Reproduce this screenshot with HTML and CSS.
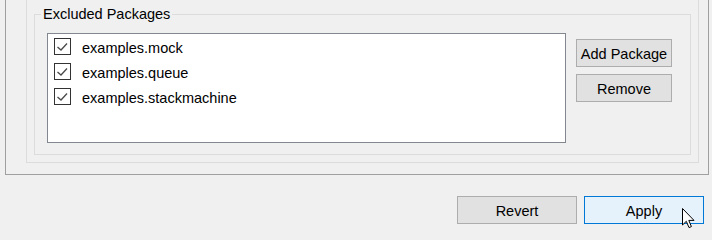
FILE: index.html
```html
<!DOCTYPE html>
<html>
<head>
<meta charset="utf-8">
<link rel="stylesheet" href="styles.css">
</head>
<body>
<div class="outer">
  <div class="middle">
    <div class="group">
      <div class="group-title">Excluded Packages</div>
      <div class="group-row">
        <div class="list">
          <div class="item"><span class="box"><svg width="15" height="15" viewBox="0 0 15 15"><polyline points="2.5,8 6,11 12,4.5" fill="none" stroke="#4a4a4a" stroke-width="1.3"/></svg></span><span class="label">examples.mock</span></div>
          <div class="item"><span class="box"><svg width="15" height="15" viewBox="0 0 15 15"><polyline points="2.5,8 6,11 12,4.5" fill="none" stroke="#4a4a4a" stroke-width="1.3"/></svg></span><span class="label">examples.queue</span></div>
          <div class="item"><span class="box"><svg width="15" height="15" viewBox="0 0 15 15"><polyline points="2.5,8 6,11 12,4.5" fill="none" stroke="#4a4a4a" stroke-width="1.3"/></svg></span><span class="label">examples.stackmachine</span></div>
        </div>
        <div class="side-buttons">
          <button class="btn side">Add Package</button>
          <button class="btn side">Remove</button>
        </div>
      </div>
    </div>
  </div>
</div>
<div class="footer">
  <button class="btn foot">Revert</button>
  <button class="btn foot primary">Apply
    <svg class="cursor" width="14" height="21" viewBox="0 0 14 21"><path d="M0.5,0.5 V17 L4.3,13.3 L7,19.6 L9.4,18.6 L6.8,12.4 H12 Z" fill="#fff" stroke="#000" stroke-width="1" stroke-linejoin="miter"/></svg>
  </button>
</div>
</body>
</html>
```
FILE: styles.css
```css
html, body {
  margin: 0;
  padding: 0;
  background: #f0f0f0;
}
body {
  width: 712px;
  height: 233px;
  overflow: hidden;
  font-family: "Liberation Sans", Arial, sans-serif;
  font-size: 14.5px;
  color: #000;
}
.outer {
  margin-left: 5px;
  width: 704px;
  box-sizing: border-box;
  border: 1px solid #a0a0a0;
  border-top: none;
  padding: 0 9px 11px 20px;
}
.middle {
  border: 1px solid #dcdcdc;
  border-top: none;
  padding: 14px 7px 7px 7px;
}
.group {
  border: 1px solid #dcdcdc;
  padding: 0 18px 11px 12px;
}
.group-title {
  width: max-content;
  margin: -9px 0 0 -6px;
  padding: 0 2px;
  background: #f0f0f0;
  line-height: 16px;
  height: 16px;
}
.group-row {
  display: flex;
  gap: 10px;
  margin-top: 11px;
}
.list {
  flex: 1;
  height: 110px;
  box-sizing: border-box;
  border: 1px solid #828790;
  background: #fff;
  padding: 4px 6px;
}
.item {
  display: flex;
  align-items: flex-start;
  height: 25px;
}
.box {
  width: 17px;
  height: 17px;
  box-sizing: border-box;
  border: 1px solid #333;
  background: #fff;
  display: flex;
  align-items: center;
  justify-content: center;
}
.box svg { display: block; }
.label {
  margin-left: 11px;
  line-height: 20px;
}
.side-buttons {
  display: flex;
  flex-direction: column;
  gap: 7px;
  padding-top: 6px;
}
.btn {
  font-family: "Liberation Sans", Arial, sans-serif;
  font-size: 14.5px;
  color: #000;
  background: #e1e1e1;
  border: 1px solid #adadad;
  box-sizing: border-box;
  padding: 2px 0 0 0;
  margin: 0;
  line-height: 16px;
  text-align: center;
}
.btn.side {
  width: 96px;
  height: 28px;
}
.footer {
  display: flex;
  justify-content: flex-end;
  gap: 7px;
  padding-right: 8px;
  margin-top: 21px;
}
.btn.foot {
  width: 120px;
  height: 28px;
}
.btn.primary {
  position: relative;
  background: #e5f1fb;
  border-color: #0078d7;
}
.cursor {
  position: absolute;
  left: 97px;
  top: 11px;
}
```
